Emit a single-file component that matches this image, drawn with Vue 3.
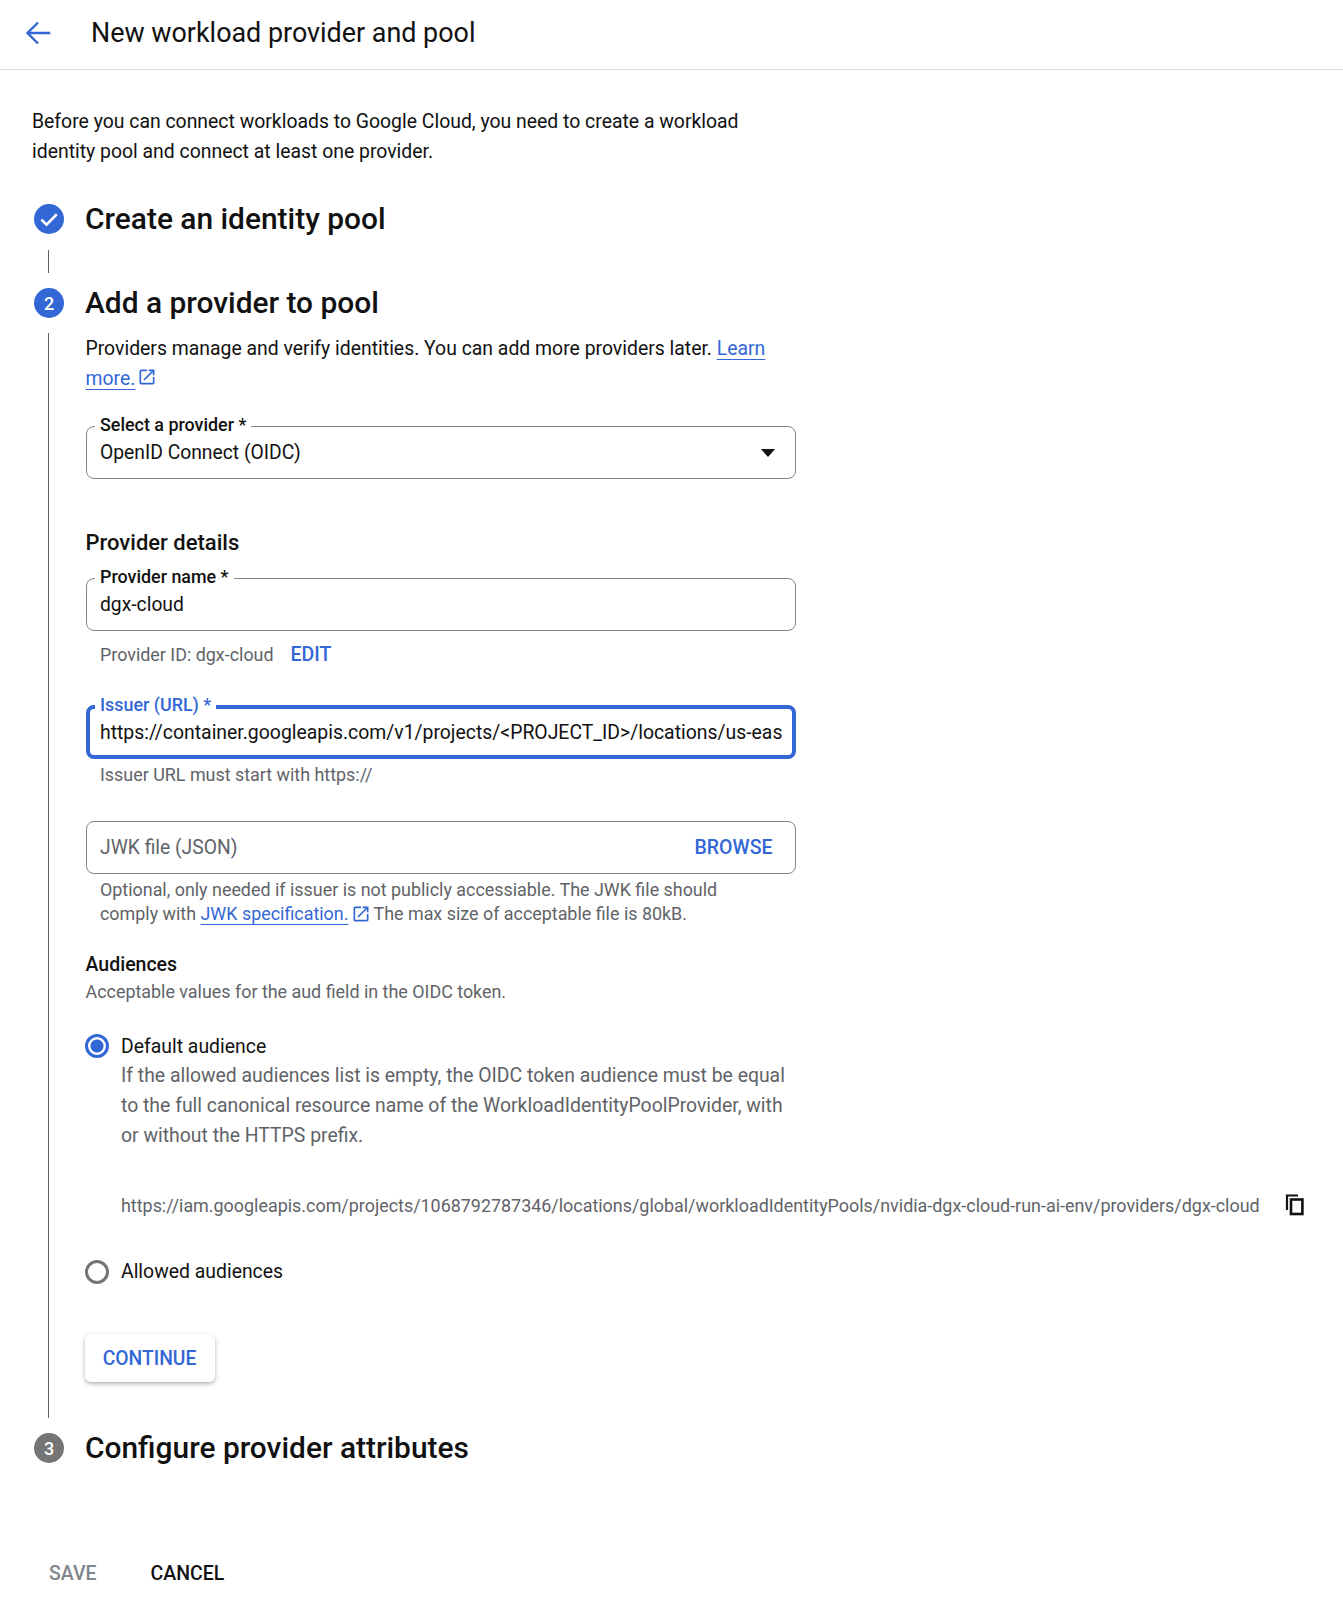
<template>
  <div class="page">
    <header class="topbar">
      <svg class="back" viewBox="0 0 24 24" width="28" height="28"><path d="M22.5 12H3M12 3l-9 9 9 9" fill="none" stroke="#3367d6" stroke-width="2.1" /></svg>
      <h1>New workload provider and pool</h1>
    </header>

    <main class="content">
      <p class="intro">
        Before you can connect workloads to Google Cloud, you need to create a workload
        identity pool and connect at least one provider.
      </p>

      <div class="step-head">
        <span class="step-num done">
          <svg viewBox="0 0 24 24" width="26" height="26"><path d="M5 12.6l4.7 4.6L19.2 7.6" fill="none" stroke="#fff" stroke-width="2.4" /></svg>
        </span>
        <h2>Create an identity pool</h2>
      </div>
      <div class="connector"></div>

      <div class="step-head">
        <span class="step-num">2</span>
        <h2>Add a provider to pool</h2>
      </div>

      <div class="step-body">
        <p class="lead">
          Providers manage and verify identities. You can add more providers later.
          <a class="link">Learn more.</a><svg class="ext" viewBox="0 0 24 24" width="20" height="20"><path :d="openIcon" fill="#3367d6" /></svg>
        </p>

        <div class="field select-field">
          <label>Select a provider *</label>
          <span class="value">OpenID Connect (OIDC)</span>
          <span class="caret"></span>
        </div>

        <h3 class="details">Provider details</h3>

        <div class="field name-field">
          <label>Provider name *</label>
          <span class="value">dgx-cloud</span>
        </div>
        <div class="provider-id">
          <span>Provider ID: dgx-cloud</span>
          <a class="action">EDIT</a>
        </div>

        <div class="field focused">
          <label>Issuer (URL) *</label>
          <span class="value">{{ issuer }}</span>
        </div>
        <div class="hint">Issuer URL must start with https://</div>

        <div class="field jwk-field">
          <span class="value muted">JWK file (JSON)</span>
          <a class="action browse">BROWSE</a>
        </div>
        <p class="jwk-help">
          Optional, only needed if issuer is not publicly accessiable. The JWK file should
          comply with <a class="link">JWK specification.</a><svg class="ext small" viewBox="0 0 24 24" width="20" height="20"><path :d="openIcon" fill="#3367d6" /></svg>
          The max size of acceptable file is 80kB.
        </p>

        <h4 class="aud-title">Audiences</h4>
        <div class="aud-sub">Acceptable values for the aud field in the OIDC token.</div>

        <div class="radio-row first">
          <span class="radio on"></span>
          <span>Default audience</span>
        </div>
        <p class="radio-desc">
          If the allowed audiences list is empty, the OIDC token audience must be equal
          to the full canonical resource name of the WorkloadIdentityPoolProvider, with
          or without the HTTPS prefix.
        </p>
        <div class="aud-url">
          <span>{{ audienceUrl }}</span>
          <svg class="copy" viewBox="0 0 20 22" width="20" height="22">
            <path d="M13 1.5H2V16" fill="none" stroke="#111" stroke-width="2.2" />
            <rect x="6" y="5.5" width="11.4" height="14.5" fill="none" stroke="#111" stroke-width="2.6" />
          </svg>
        </div>
        <div class="radio-row second">
          <span class="radio"></span>
          <span>Allowed audiences</span>
        </div>

        <button class="continue">CONTINUE</button>
      </div>

      <div class="step-head">
        <span class="step-num off">3</span>
        <h2>Configure provider attributes</h2>
      </div>

      <div class="footer">
        <button class="flat disabled">SAVE</button>
        <button class="flat">CANCEL</button>
      </div>
    </main>
  </div>
</template>

<script setup>
const issuer = 'https://container.googleapis.com/v1/projects/<PROJECT_ID>/locations/us-eas'
const audienceUrl = 'https://iam.googleapis.com/projects/1068792787346/locations/global/workloadIdentityPools/nvidia-dgx-cloud-run-ai-env/providers/dgx-cloud'
const openIcon = 'M19 19H5V5h7V3H5c-1.11 0-2 .9-2 2v14c0 1.1.89 2 2 2h14c1.1 0 2-.9 2-2v-7h-2v7zM14 3v2h3.59l-9.83 9.83 1.41 1.41L19 6.41V10h2V3h-7z'
</script>

<style>
html, body { background: #fff; }
</style>

<style scoped>
.page {
  width: 1343px;
  height: 1600px;
  overflow: hidden;
  background: #fff;
  color: #111;
  font-family: Roboto, "Liberation Sans", sans-serif;
}
.topbar {
  height: 65px;
  padding: 0 0 4px 24px;
  box-sizing: content-box;
  display: flex;
  align-items: center;
  border-bottom: 1px solid #dadce0;
}
.back { margin-right: 39px; flex: none; }
.topbar h1 { margin: 0; font-size: 26.9px; font-weight: 400; }
.content { padding-left: 32px; }
.intro {
  margin: 37px 0 0;
  width: 730px;
  font-size: 19.4px;
  line-height: 30px;
}
.step-head {
  display: flex;
  align-items: center;
  height: 30px;
  margin-left: 2px;
}
.intro + .step-head { margin-top: 37px; }
.step-head h2 {
  margin: 0 0 0 21px;
  font-size: 29.9px;
  font-weight: 500;
  line-height: 30px;
}
.step-num {
  width: 30px;
  height: 30px;
  border-radius: 50%;
  background: #3367d6;
  color: #fff;
  font-size: 18px;
  font-weight: 500;
  display: flex;
  align-items: center;
  justify-content: center;
  flex: none;
}
.step-num.off { background: #757575; }
.connector {
  width: 1px;
  height: 23px;
  margin: 16px 0 15px 16px;
  background: #5f6368;
}
.step-body {
  margin: 15px 0 15px 16px;
  height: 1085px;
  box-sizing: border-box;
  border-left: 1px solid #5f6368;
  padding: 1px 0 0 36.5px;
}
.lead {
  margin: 0;
  width: 700px;
  font-size: 19.4px;
  line-height: 30px;
}
.link {
  color: #3367d6;
  text-decoration: underline;
  text-underline-offset: 4px;
  text-decoration-thickness: 1px;
}
.ext { vertical-align: -2px; margin-left: 2px; }
.field {
  position: relative;
  width: 710.5px;
  height: 53px;
  box-sizing: border-box;
  border: 1px solid #80868b;
  border-radius: 8px;
  display: flex;
  align-items: center;
  padding: 0 13.5px;
}
.field label {
  position: absolute;
  top: -12px;
  left: 8.5px;
  padding: 0 5px;
  background: #fff;
  font-size: 17.9px;
  line-height: 20px;
  font-weight: 500;
}
.value {
  font-size: 19.3px;
  white-space: nowrap;
  flex: 1;
}
.muted { color: #5f6368; }
.select-field { margin-top: 32px; }
.caret {
  width: 0;
  height: 0;
  border-left: 7.5px solid transparent;
  border-right: 7.5px solid transparent;
  border-top: 8px solid #111;
  margin-right: 7px;
}
.details {
  margin: 51px 0 0;
  font-size: 22px;
  font-weight: 500;
  line-height: 26px;
}
.name-field { margin-top: 22px; }
.provider-id {
  margin-top: 13px;
  padding-left: 14.5px;
  display: flex;
  align-items: center;
  gap: 17px;
  height: 20px;
  font-size: 17.9px;
  color: #5f6368;
}
.action {
  color: #3367d6;
  font-weight: 500;
  font-size: 19.5px;
}
.focused {
  margin-top: 41px;
  height: 54px;
  border: 4px solid #3367d6;
  padding: 0 9px 0 10.5px;
}
.focused .value { font-size: 19.4px; }
.focused label { color: #3367d6; top: -14px; left: 5.5px; }
.hint {
  margin-top: 6px;
  padding-left: 14.5px;
  font-size: 17.9px;
  line-height: 20px;
  color: #5f6368;
}
.jwk-field { margin-top: 36px; }
.browse { margin-right: 9px; }
.jwk-help {
  margin: 4px 0 0;
  padding-left: 14.5px;
  width: 660px;
  font-size: 17.9px;
  line-height: 24px;
  color: #5f6368;
}
.ext.small { margin: 0 -2px 0 3px; vertical-align: -4px; }
.aud-title {
  margin: 28px 0 0;
  font-size: 19.5px;
  font-weight: 500;
  line-height: 22px;
}
.aud-sub {
  margin-top: 6px;
  font-size: 17.9px;
  line-height: 20px;
  color: #5f6368;
}
.radio-row {
  display: flex;
  align-items: center;
  gap: 12px;
  height: 24px;
  margin-left: -0.5px;
  font-size: 19.4px;
}
.radio-row.first { margin-top: 32px; }
.radio-row.second { margin-top: 39.5px; }
.radio {
  width: 24px;
  height: 24px;
  box-sizing: border-box;
  border: 3px solid #757575;
  border-radius: 50%;
  flex: none;
}
.radio.on {
  border-color: #3367d6;
  background: radial-gradient(circle, #3367d6 0 6px, #fff 7px);
}
.radio-desc {
  margin: 3px 0 0 35.5px;
  width: 668px;
  font-size: 19.4px;
  line-height: 30px;
  color: #5f6368;
}
.aud-url {
  margin: 39px 0 0 35.5px;
  height: 30px;
  display: flex;
  align-items: center;
  font-size: 17.92px;
  color: #5f6368;
  white-space: nowrap;
}
.copy { margin-left: 25px; flex: none; }
.continue {
  display: block;
  margin: 50.5px 0 0 -1px;
  width: 130px;
  height: 48px;
  border: 0;
  border-radius: 6px;
  background: #fff;
  color: #3367d6;
  font-family: inherit;
  font-size: 19.3px;
  font-weight: 500;
  box-shadow: 0 2px 4px rgba(60, 64, 67, 0.4);
}
.footer {
  margin-top: 99px;
  display: flex;
  align-items: center;
  gap: 54px;
  padding-left: 17px;
}
.flat {
  border: 0;
  padding: 0;
  background: none;
  color: #111;
  font-family: inherit;
  font-size: 19.5px;
  font-weight: 500;
  line-height: 24px;
}
.flat.disabled { color: #80868b; }
</style>
